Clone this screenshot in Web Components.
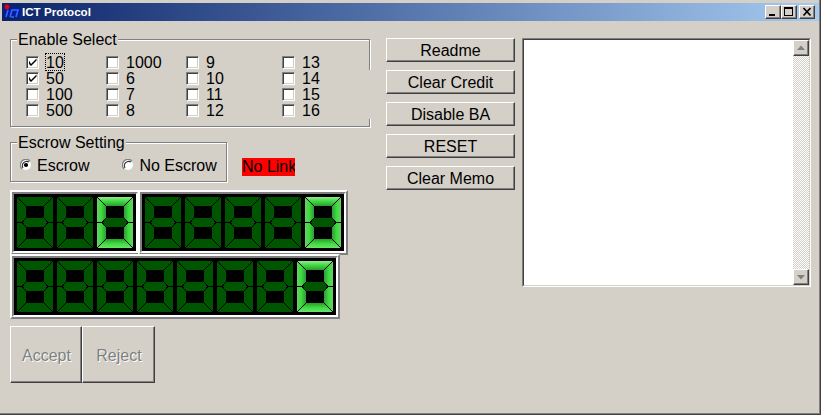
<!DOCTYPE html>
<html>
<head>
<meta charset="utf-8">
<title>ICT Protocol</title>
<style>
  html, body { margin: 0; padding: 0; background: #d4d0c8; overflow: hidden; }
  .left { width: 376px; flex: none; display: flex; flex-direction: column; }
  .btns { width: 129px; flex: none; margin-top: 8px; display: flex; flex-direction: column; gap: 8px; }
  .row { display: flex; align-items: flex-start; }
  .row win-group { width: 217px; }
  .row no-link { margin: 25px 0 0 15px; }
  .panels { display: flex; margin-top: 8px; }
  .panels seg-panel + seg-panel { margin-left: -2px; }
  .big { margin-top: -1px; }
  .choice { display: flex; align-items: center; height: 18px; padding: 5px 0 7px 9px; }
  .checks { display: grid; grid-template-columns: 80px 80px 96px 80px; grid-auto-flow: column; grid-template-rows: repeat(4, 16px); padding: 6px 0 8px 15px; }
  .pair { display: flex; margin-top: 7px; }
  win-group.first { width: 360px; margin-bottom: 6px; }
  win-radio.second { margin-left: 33px; }
</style>
</head>
<body>
<win-window>
  <div class="left">
    <win-group class="first" label="Enable Select" gap>
      <div class="checks">
        <win-check checked focused>10</win-check>
        <win-check checked>50</win-check>
        <win-check>100</win-check>
        <win-check>500</win-check>
        <win-check>1000</win-check>
        <win-check>6</win-check>
        <win-check>7</win-check>
        <win-check>8</win-check>
        <win-check>9</win-check>
        <win-check>10</win-check>
        <win-check>11</win-check>
        <win-check>12</win-check>
        <win-check>13</win-check>
        <win-check>14</win-check>
        <win-check>15</win-check>
        <win-check>16</win-check>
      </div>
    </win-group>
    <div class="row">
      <win-group label="Escrow Setting">
        <div class="choice">
          <win-radio checked>Escrow</win-radio>
          <win-radio class="second">No Escrow</win-radio>
        </div>
      </win-group>
      <no-link>No Link</no-link>
    </div>
    <div class="panels">
      <seg-panel digits="3"></seg-panel>
      <seg-panel digits="5"></seg-panel>
    </div>
    <seg-panel class="big" digits="8"></seg-panel>
    <div class="pair">
      <big-btn>Accept</big-btn>
      <big-btn>Reject</big-btn>
    </div>
  </div>
  <div class="btns">
    <win-btn>Readme</win-btn>
    <win-btn>Clear Credit</win-btn>
    <win-btn>Disable BA</win-btn>
    <win-btn>RESET</win-btn>
    <win-btn>Clear Memo</win-btn>
  </div>
  <memo-box></memo-box>
</win-window>

<script>
// small helper so each class stays short
function shadow(el, html) {
  el.attachShadow({ mode: "open" }).innerHTML = html;
}

class WinWindow extends HTMLElement {
  constructor() {
    super();
    shadow(this, `
    <style>
      :host { display: block; width: 821px; height: 415px; box-sizing: border-box; background: #d4d0c8;
              font: 16px/18px "Liberation Sans", Arial, sans-serif; color: #000;
              border-right: 1px solid #404040; border-bottom: 1px solid #404040; }
      .in { height: 100%; box-sizing: border-box; border-right: 1px solid #808080; border-bottom: 1px solid #808080; padding: 3px 0 0 2px; }
      .title { height: 18px; display: flex; align-items: center;
               background: linear-gradient(90deg, #0a246a, #a6caf0); color: #fff;
               font: bold 11.6px/18px "Liberation Sans", sans-serif; }
      .logo { margin-left: 2px; width: 16px; height: 16px; flex: none; }
      .name { margin-left: 2px; flex: 1; }
      .caps { display: flex; margin-right: 4px; }
      .cap { width: 16px; height: 14px; box-sizing: border-box; background: #d4d0c8; border: 1px solid; border-color: #fff #404040 #404040 #fff; box-shadow: inset -1px -1px 0 #808080; display: flex; }
      .cap svg { width: 14px; height: 12px; }
      .cap.x { margin-left: 2px; }
      .main { display: flex; padding: 9px 0 0 8px; }
    </style>
    <div class="in">
      <div class="title">
        <svg class="logo" viewBox="0 0 16 16">
          <rect width="16" height="16" fill="#0a246a"/>
          <rect x="0" y="3" width="16" height="10" fill="#0a1a9a"/>
          <circle cx="3" cy="3" r="2.4" fill="#f00000"/>
          <path d="M2 13 L4 6 M6 13 L8 6 H11 M7 13 H10 M11 6 H15 M12 13 L14 6" stroke="#2a6cff" stroke-width="1.6" fill="none"/>
        </svg>
        <span class="name">ICT Protocol</span>
        <div class="caps">
          <div class="cap"><svg viewBox="0 0 14 12"><rect x="3" y="8" width="6" height="2"/></svg></div>
          <div class="cap"><svg viewBox="0 0 14 12"><path d="M2 1H11V10H2Z M3 3V9H10V3Z" fill-rule="evenodd"/></svg></div>
          <div class="cap x"><svg viewBox="0 0 14 12"><path d="M3.5 2 L10.5 9.5 M10.5 2 L3.5 9.5" stroke="#000" stroke-width="1.7"/></svg></div>
        </div>
      </div>
      <div class="main"><slot></slot></div>
    </div>`);
  }
}

class WinGroup extends HTMLElement {
  constructor() {
    super();
    shadow(this, `
    <style>
      :host { display: block; position: relative; }
      fieldset { margin: 0; padding: 0; border: 1px solid #808080; box-shadow: 1px 1px 0 #fff, inset 1px 1px 0 #fff; min-width: 0; }
      legend { margin-left: 6px; padding: 0 1px; height: 18px; line-height: 20px; background: #d4d0c8; }
      .gap { display: none; position: absolute; right: -1px; top: 40px; width: 3px; height: 49px; background: #d4d0c8; }
      :host([gap]) .gap { display: block; }
    </style>
    <fieldset><legend></legend><slot></slot></fieldset>
    <div class="gap"></div>`);
    this.shadowRoot.querySelector("legend").textContent = this.getAttribute("label");
  }
}

class WinCheck extends HTMLElement {
  constructor() {
    super();
    const on = this.hasAttribute("checked");
    shadow(this, `
    <style>
      :host { display: flex; align-items: center; height: 16px; }
      .box { width: 13px; height: 13px; box-sizing: border-box; background: #fff; flex: none; display: flex;
             border: 1px solid; border-color: #808080 #fff #fff #808080; box-shadow: inset 1px 1px 0 #404040, inset -1px -1px 0 #d4d0c8; }
      svg { width: 11px; height: 11px; }
      .t { margin-left: 7px; height: 16px; line-height: 18px; }
      :host([focused]) .t { outline: 1px dotted #000; }
    </style>
    <div class="box">${on ? '<svg viewBox="0 0 11 11"><path d="M2 3.5 V7 L4 9 L9.5 3.5 V1.5 L4 7 Z"/></svg>' : ""}</div>
    <span class="t"><slot></slot></span>`);
  }
}

class WinRadio extends HTMLElement {
  constructor() {
    super();
    const on = this.hasAttribute("checked");
    shadow(this, `
    <style>
      :host { display: inline-flex; align-items: center; height: 18px; }
      .r { width: 12px; height: 12px; flex: none; }
      .t { margin-left: 5px; height: 18px; line-height: 20px; }
    </style>
    <svg class="r" viewBox="0 0 12 12">
      <circle cx="6" cy="6" r="5" fill="#fff"/>
      <path d="M10 2 A5.5 5.5 0 0 0 2 10" stroke="#808080" fill="none" stroke-width="1.2"/>
      <path d="M9 3 A4.4 4.4 0 0 0 3 9" stroke="#303030" fill="none" stroke-width="1.1"/>
      ${on ? '<circle cx="6" cy="6" r="2.1" fill="#000"/>' : ""}
    </svg>
    <span class="t"><slot></slot></span>`);
  }
}

class NoLink extends HTMLElement {
  constructor() {
    super();
    shadow(this, `
    <style>:host { display: block; width: 53px; height: 18px; background: #f00; white-space: nowrap; overflow: hidden; }</style>
    <slot></slot>`);
  }
}

class WinBtn extends HTMLElement {
  constructor() {
    super();
    shadow(this, `
    <style>
      :host { display: flex; align-items: center; justify-content: center; height: 24px; box-sizing: border-box; padding-top: 2px; background: #d4d0c8;
              border: 1px solid; border-color: #fff #404040 #404040 #fff; box-shadow: inset -1px -1px 0 #808080; }
    </style>
    <slot></slot>`);
  }
}

class BigBtn extends HTMLElement {
  constructor() {
    super();
    shadow(this, `
    <style>
      :host { display: flex; align-items: center; justify-content: center; width: 73px; height: 57px; box-sizing: border-box; padding: 2px 0 0 1px; background: #d4d0c8;
              border: 1px solid; border-color: #fff #404040 #404040 #fff; box-shadow: inset -1px -1px 0 #808080;
              color: #808080; text-shadow: 1px 1px 0 #fff; }
      :host(:first-child) { width: 72px; }
    </style>
    <slot></slot>`);
  }
}

const LINES = `
  <g stroke="#000" stroke-width="1" shape-rendering="crispEdges" fill="none">
    <path d="M0 0 L9 9 M36 0 L27 9 M0 51 L9 42 M36 51 L27 42"/>
    <path d="M0 25.5 H5 M31 25.5 H36 M5 25.5 L9 21 M5 25.5 L9 30 M31 25.5 L27 21 M31 25.5 L27 30"/>
  </g>`;

class SegDigit extends HTMLElement {
  constructor() {
    super();
    const lit = this.hasAttribute("lit");
    const off = "#005500";
    const seg = (id) => lit ? `url(#${id})` : off;
    shadow(this, `
    <style>
      :host { display: block; width: 36px; height: 51px; flex: none; }
      svg { display: block; }
    </style>
    <svg width="36" height="51" viewBox="0 0 36 51">
      <defs>
        <linearGradient id="t" x1="0" y1="0" x2="0" y2="1"><stop offset="0" stop-color="#9ce29c"/><stop offset=".4" stop-color="#45e045"/><stop offset="1" stop-color="#2c9a2c"/></linearGradient>
        <linearGradient id="b" x1="0" y1="1" x2="0" y2="0"><stop offset="0" stop-color="#70e070"/><stop offset=".45" stop-color="#3fe03f"/><stop offset="1" stop-color="#2c9a2c"/></linearGradient>
        <linearGradient id="l" x1="0" y1="0" x2="1" y2="0"><stop offset="0" stop-color="#70c870"/><stop offset=".45" stop-color="#3ce03c"/><stop offset="1" stop-color="#2f9a3a"/></linearGradient>
        <linearGradient id="r" x1="1" y1="0" x2="0" y2="0"><stop offset="0" stop-color="#70c870"/><stop offset=".45" stop-color="#3ce03c"/><stop offset="1" stop-color="#2f9a3a"/></linearGradient>
      </defs>
      <rect width="36" height="51" fill="${off}"/>
      <polygon points="0,0 36,0 27,9 9,9" fill="${seg("t")}"/>
      <polygon points="0,51 36,51 27,42 9,42" fill="${seg("b")}"/>
      <polygon points="0,0 9,9 9,21 5,25 0,25" fill="${seg("l")}"/>
      <polygon points="0,51 9,42 9,30 5,26 0,26" fill="${seg("l")}"/>
      <polygon points="36,0 27,9 27,21 31,25 36,25" fill="${seg("r")}"/>
      <polygon points="36,51 27,42 27,30 31,26 36,26" fill="${seg("r")}"/>
      <rect x="9" y="9" width="18" height="12" fill="#000"/>
      <rect x="9" y="30" width="18" height="12" fill="#000"/>
      ${LINES}
    </svg>`);
  }
}

class SegPanel extends HTMLElement {
  constructor() {
    super();
    const n = parseInt(this.getAttribute("digits"));
    let cells = "";
    for (let i = 0; i < n; i++) cells += i === n - 1 ? "<seg-digit lit></seg-digit>" : "<seg-digit></seg-digit>";
    shadow(this, `
    <style>
      :host { display: block; width: max-content; position: relative; }
      .o { border: 2px solid; border-color: #fff #808080 #808080 #fff; }
      .i { border: 2px solid; border-color: #808080 #fff #fff #808080; background: #000; padding: 3px; display: flex; gap: 4px; }
    </style>
    <div class="o"><div class="i">${cells}</div></div>`);
  }
}

class MemoBox extends HTMLElement {
  constructor() {
    super();
    const tri = (d) => `<svg width="14" height="14" viewBox="0 0 14 14"><path d="${d}" fill="#808080"/></svg>`;
    shadow(this, `
    <style>
      :host { display: block; width: 289px; height: 249px; margin: 8px 0 0 7px; box-sizing: border-box; flex: none;
              border: 1px solid; border-color: #808080 #fff #fff #808080; }
      .in { height: 100%; box-sizing: border-box; display: flex; border: 1px solid; border-color: #404040 #d4d0c8 #d4d0c8 #404040; }
      .text { flex: 1; background: #fff; }
      .bar { width: 16px; display: flex; flex-direction: column; background: repeating-conic-gradient(#fff 0 25%, #d4d0c8 0 50%) 0 0 / 2px 2px; }
      .track { flex: 1; }
      .arrow { height: 16px; box-sizing: border-box; background: #d4d0c8; border: 1px solid; border-color: #fff #404040 #404040 #fff; box-shadow: inset -1px -1px 0 #808080; display: flex; }
    </style>
    <div class="in">
      <div class="text"></div>
      <div class="bar">
        <div class="arrow">${tri("M3 9 L7 4.5 L11 9 Z")}</div>
        <div class="track"></div>
        <div class="arrow">${tri("M3 5 L11 5 L7 9.5 Z")}</div>
      </div>
    </div>`);
  }
}

customElements.define("win-window", WinWindow);
customElements.define("win-group", WinGroup);
customElements.define("win-check", WinCheck);
customElements.define("win-radio", WinRadio);
customElements.define("no-link", NoLink);
customElements.define("win-btn", WinBtn);
customElements.define("big-btn", BigBtn);
customElements.define("seg-digit", SegDigit);
customElements.define("seg-panel", SegPanel);
customElements.define("memo-box", MemoBox);
</script>
</body>
</html>
